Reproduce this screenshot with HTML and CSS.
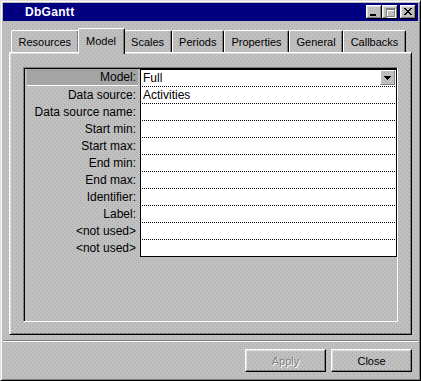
FILE: index.html
```html
<!DOCTYPE html>
<html>
<head>
<meta charset="utf-8">
<link rel="stylesheet" href="styles.css">
</head>
<body>
<div class="window">
  <div class="titlebar">
    <span class="title">DbGantt</span>
    <div class="caption-buttons">
      <span class="cap-btn"><svg width="16" height="14" shape-rendering="crispEdges"><rect x="4" y="9" width="6" height="2" fill="#000"/></svg></span>
      <span class="cap-btn"><svg width="16" height="14" shape-rendering="crispEdges">
        <g fill="#fff"><rect x="5" y="4" width="9" height="2"/><rect x="5" y="4" width="1" height="9"/><rect x="13" y="4" width="1" height="9"/><rect x="5" y="12" width="9" height="1"/></g>
        <g fill="#808080"><rect x="4" y="3" width="9" height="2"/><rect x="4" y="3" width="1" height="9"/><rect x="12" y="3" width="1" height="9"/><rect x="4" y="11" width="9" height="1"/></g>
      </svg></span>
      <span class="cap-btn close"><svg width="16" height="14" shape-rendering="crispEdges"><g fill="#000">
        <rect x="4" y="3" width="2" height="1"/><rect x="10" y="3" width="2" height="1"/>
        <rect x="5" y="4" width="2" height="1"/><rect x="9" y="4" width="2" height="1"/>
        <rect x="6" y="5" width="4" height="1"/>
        <rect x="7" y="6" width="2" height="1"/>
        <rect x="6" y="7" width="4" height="1"/>
        <rect x="5" y="8" width="2" height="1"/><rect x="9" y="8" width="2" height="1"/>
        <rect x="4" y="9" width="2" height="1"/><rect x="10" y="9" width="2" height="1"/>
      </g></svg></span>
    </div>
  </div>

  <div class="tabs">
    <div class="tab">Resources</div>
    <div class="tab active">Model</div>
    <div class="tab">Scales</div>
    <div class="tab">Periods</div>
    <div class="tab">Properties</div>
    <div class="tab">General</div>
    <div class="tab">Callbacks</div>
  </div>

  <div class="panel">
    <div class="group">
      <div class="props">
        <div class="label selected">Model:</div>
        <div class="value first"><span>Full</span><span class="dropbtn"><svg width="7" height="4" shape-rendering="crispEdges"><g fill="#000"><rect x="0" y="0" width="7" height="1"/><rect x="1" y="1" width="5" height="1"/><rect x="2" y="2" width="3" height="1"/><rect x="3" y="3" width="1" height="1"/></g></svg></span></div>
        <div class="label">Data source:</div><div class="value">Activities</div>
        <div class="label">Data source name:</div><div class="value"></div>
        <div class="label">Start min:</div><div class="value"></div>
        <div class="label">Start max:</div><div class="value"></div>
        <div class="label">End min:</div><div class="value"></div>
        <div class="label">End max:</div><div class="value"></div>
        <div class="label">Identifier:</div><div class="value"></div>
        <div class="label">Label:</div><div class="value"></div>
        <div class="label">&lt;not used&gt;</div><div class="value"></div>
        <div class="label">&lt;not used&gt;</div><div class="value last"></div>
      </div>
    </div>
  </div>

  <div class="separator"></div>

  <div class="buttons">
    <button class="btn disabled">Apply</button>
    <button class="btn">Close</button>
  </div>
</div>
</body>
</html>
```

FILE: styles.css
```css
:root {
  --dot: #a9a9a9;
  --stipple:
    conic-gradient(at 1px 1px, transparent 75%, var(--dot) 0) 0 0 / 4px 4px fixed,
    conic-gradient(at 1px 1px, transparent 75%, var(--dot) 0) 2px 2px / 4px 4px fixed,
    #c0c0c0;
}

html, body {
  margin: 0;
  padding: 0;
}

body {
  width: 421px;
  height: 381px;
  overflow: hidden;
  font-family: "Liberation Sans", Arial, sans-serif;
  font-size: 11px;
  color: #000;
}

.window {
  box-sizing: border-box;
  width: 421px;
  height: 381px;
  border: 1px solid;
  border-color: #dfdfdf #000 #000 #dfdfdf;
  box-shadow: inset 1px 1px #fff, inset -1px -1px #808080;
  padding: 2px;
  background: var(--stipple);
  display: flex;
  flex-direction: column;
}

/* Title bar */
.titlebar {
  height: 18px;
  flex: none;
  background: #000080;
  color: #fff;
  display: flex;
  align-items: center;
  padding: 0 2px 0 22px;
}

.title {
  font-weight: bold;
  font-size: 12px;
  letter-spacing: 0.3px;
}

.caption-buttons {
  margin-left: auto;
  display: flex;
}

.cap-btn {
  width: 16px;
  height: 14px;
  display: block;
  background: var(--stipple);
  box-shadow: inset -1px -1px #000, inset 1px 1px #fff, inset -2px -2px #808080, inset 2px 2px #dfdfdf;
}

.cap-btn svg {
  display: block;
}

.cap-btn.close {
  margin-left: 2px;
}

/* Tabs */
.tabs {
  display: flex;
  align-items: flex-end;
  height: 24px;
  flex: none;
  margin: 7px 6px 0;
  padding-left: 2px;
}

.tab {
  box-sizing: border-box;
  height: 22px;
  padding: 0 6.5px;
  border: 1px solid;
  border-bottom: none;
  border-color: #fff #000 transparent #fff;
  border-radius: 2px 2px 0 0;
  box-shadow: inset -1px 0 #808080;
  display: flex;
  align-items: center;
  justify-content: center;
  white-space: nowrap;
}

.tab.active {
  height: 26px;
  margin: 0 -1px -2px;
  padding: 0 7.5px 2px;
  position: relative;
  z-index: 1;
  background: var(--stipple);
}

/* Panel */
.panel {
  box-sizing: border-box;
  height: 283px;
  flex: none;
  margin: 0 6px;
  border: 1px solid;
  border-color: #fff #000 #000 #fff;
  box-shadow: inset 1px 1px #dfdfdf, inset -1px -1px #808080;
  padding: 14px 13px 0;
}

.group {
  box-sizing: border-box;
  height: 255px;
  border: 1px solid;
  border-color: #808080 #fff #fff #808080;
  box-shadow: inset 1px 1px #000;
  padding: 1px 0 0 1px;
}

.props {
  display: grid;
  grid-template-columns: 115px 257px;
  font-size: 12px;
}

.label {
  text-align: right;
  padding-right: 4px;
  line-height: 16px;
  white-space: nowrap;
}

.label.selected {
  margin: 0 2px 1px;
  padding: 1px 2px 0 0;
  line-height: 15px;
  background: #a4a4a4;
  border-bottom: 1px solid #fff;
}

.value {
  box-sizing: border-box;
  height: 17px;
  background: #fff;
  border-left: 1px solid #000;
  border-right: 1px solid #000;
  border-bottom: 1px dotted #000;
  padding-left: 2px;
  line-height: 16px;
  white-space: nowrap;
}

.value.first {
  height: 18px;
  border-top: 1px solid #000;
  display: flex;
  align-items: flex-start;
  justify-content: space-between;
  padding-right: 1px;
}

.value.last {
  border-bottom: 1px solid #000;
}

.dropbtn {
  box-sizing: border-box;
  width: 15px;
  height: 15px;
  border: 1px solid;
  border-color: #fff #808080 #808080 #fff;
  background: var(--stipple);
  display: flex;
  align-items: center;
  justify-content: center;
}

.dropbtn svg {
  display: block;
}

/* Bottom area */
.separator {
  box-sizing: border-box;
  height: 2px;
  flex: none;
  margin-top: 5px;
  border-top: 1px solid #808080;
  border-bottom: 1px solid #fff;
}

.buttons {
  display: flex;
  justify-content: flex-end;
  gap: 5px;
  margin-top: 7px;
  padding-right: 6px;
}

.btn {
  box-sizing: border-box;
  width: 81px;
  height: 23px;
  margin: 0;
  padding: 0;
  font: inherit;
  color: #000;
  border: 1px solid;
  border-color: #fff #000 #000 #fff;
  box-shadow: inset -1px -1px #808080, inset 1px 1px #dfdfdf;
  background: var(--stipple);
}

.btn.disabled {
  color: #808080;
  text-shadow: 1px 1px #fff;
}
```
